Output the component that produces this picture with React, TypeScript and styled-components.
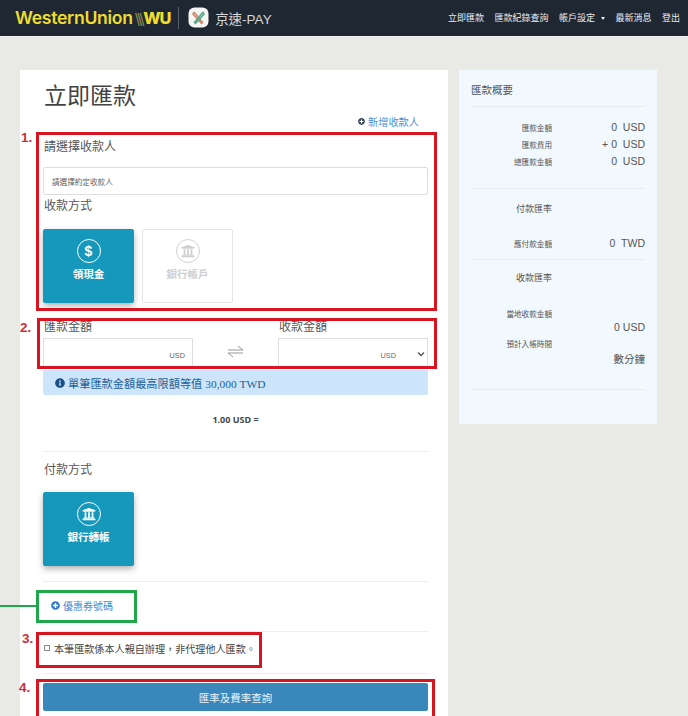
import styled, { createGlobalStyle } from "styled-components";
import { FaInfoCircle, FaPlusCircle, FaUniversity } from "react-icons/fa";

const GlobalStyle = createGlobalStyle`
  html, body {
    margin: 0;
    padding: 0;
    height: 716px;
    overflow: hidden;
    background: #e9eae6;
    font-family: "Liberation Sans", "Noto Sans CJK TC", sans-serif;
    color: #444;
  }
  * { box-sizing: border-box; }
`;

const Page = styled.div`
  position: relative;
  width: 688px;
  height: 716px;
  overflow: hidden;
`;

const Header = styled.header`
  display: flex;
  align-items: center;
  justify-content: space-between;
  height: 37px;
  padding: 0 8px 1px 15px;
  background: #1f2733;
  border-bottom: 1px solid #f4f4f2;
`;

const Brand = styled.div`
  display: flex;
  align-items: center;
`;

const WuLogo = styled.span`
  font-family: "Inter", "Liberation Sans", sans-serif;
  font-size: 17.6px;
  font-weight: 600;
  letter-spacing: -0.3px;
  color: #efdc2d;
`;

const Stripes = styled.span`
  color: #8f8a4c;
  font-size: 15px;
  letter-spacing: -2.4px;
  margin: 0 1px 0 2px;
  font-weight: 400;
`;

const WuMark = styled.span`
  font-size: 16.4px;
  font-weight: 800;
  letter-spacing: -1.2px;
`;

const BrandDivider = styled.span`
  width: 1px;
  height: 22px;
  margin: 0 9px 0 8px;
  background: #59606a;
`;

const PayName = styled.span`
  margin-left: 6px;
  font-size: 13.5px;
  color: #d4d6d8;
`;

const Nav = styled.nav`
  display: flex;
  align-items: center;
  gap: 10.5px;
  font-size: 9px;
  color: #eceef0;
`;

const Caret = styled.span`
  display: inline-block;
  margin-left: 6px;
  vertical-align: middle;
  border-top: 3px solid #eceef0;
  border-left: 2.5px solid transparent;
  border-right: 2.5px solid transparent;
`;

const Main = styled.main`
  display: flex;
  align-items: flex-start;
  gap: 11px;
  padding: 33px 0 0 20px;
`;

const Card = styled.section`
  width: 428px;
  height: 660px;
  padding: 0 20px 0 23px;
  background: #fff;
`;

const Title = styled.h1`
  margin: 12px 0 0 1px;
  font-size: 23px;
  line-height: 28px;
  font-weight: 400;
  color: #444;
`;

const AddLink = styled.div`
  display: flex;
  align-items: center;
  justify-content: flex-end;
  gap: 3px;
  height: 14px;
  margin: 4px 9px 0 0;
  font-size: 10.2px;
  color: #4a90d9;
  svg { color: #39475a; font-size: 7px; }
`;

const SectionLabel = styled.div<{ $top: number }>`
  margin-top: ${(p) => p.$top}px;
  margin-left: 1px;
  font-size: 12px;
  line-height: 16px;
  color: #555;
`;

const SelectBox = styled.div`
  display: flex;
  align-items: center;
  height: 28px;
  margin-top: 12px;
  padding-left: 8px;
  border: 1px solid #ddd;
  border-radius: 2px;
  font-size: 7.6px;
  color: #666;
`;

const Tiles = styled.div<{ $top: number }>`
  display: flex;
  gap: 8px;
  margin-top: ${(p) => p.$top}px;
`;

const Tile = styled.div<{ $active?: boolean }>`
  display: flex;
  flex-direction: column;
  align-items: center;
  width: 91px;
  height: 74px;
  padding-top: 9px;
  border-radius: 2px;
  border: 1px solid ${(p) => (p.$active ? "#1698bd" : "#e4e4e4")};
  background: ${(p) => (p.$active ? "#1698bd" : "#fff")};
  color: ${(p) => (p.$active ? "#fff" : "#d0d0d0")};
  box-shadow: ${(p) => (p.$active ? "0 3px 6px rgba(0,0,0,.3)" : "none")};
`;

const TileIcon = styled.span`
  display: flex;
  align-items: center;
  justify-content: center;
  width: 24px;
  height: 24px;
  border: 1px solid currentColor;
  border-radius: 50%;
  font-size: 14px;
  font-weight: 700;
  svg { font-size: 14px; }
`;

const TileLabel = styled.span`
  margin-top: 4px;
  font-size: 10.5px;
  line-height: 14px;
  font-weight: 700;
`;

const AmountRow = styled.div`
  display: grid;
  grid-template-columns: 150px 85px 150px;
  margin-top: 16px;
`;

const AmountColumn = styled.div`
  display: flex;
  flex-direction: column;
`;

const AmountLabel = styled.div`
  margin-left: 1px;
  font-size: 12px;
  line-height: 16px;
  color: #555;
`;

const AmountInput = styled.div`
  display: flex;
  align-items: flex-end;
  justify-content: space-between;
  height: 30px;
  margin-top: 3px;
  padding: 0 7px 8px 0;
  border: 1px solid #ddd;
  border-bottom: 0;
  font-size: 7.3px;
  color: #666;
`;

const UsdTag = styled.span<{ $select?: boolean }>`
  margin-left: auto;
  margin-right: ${(p) => (p.$select ? "24px" : "0")};
`;

const Chevron = styled.svg`
  position: absolute;
  right: 3px;
  bottom: 11px;
  width: 8px;
  height: 6px;
`;

const SelectWrap = styled.div`
  position: relative;
`;

const SwapIcon = styled.svg`
  width: 17px;
  height: 13px;
  margin: 26px 0 0 34px;
`;

const Notice = styled.div`
  display: flex;
  align-items: center;
  gap: 3px;
  height: 25px;
  margin-top: 2px;
  padding-left: 12px;
  background: #cce5fb;
  border-radius: 0 0 2px 2px;
  font-size: 11.2px;
  color: #1e5f96;
  svg { font-size: 10px; color: #1a4f84; }
`;

const Latin = styled.span`
  font-family: "Liberation Serif", serif;
  font-size: 11.4px;
`;

const Rate = styled.div`
  margin-top: 19px;
  text-align: center;
  font-family: "Open Sans", "Liberation Sans", sans-serif;
  font-size: 9px;
  line-height: 12px;
  font-weight: 700;
  color: #444;
`;

const Rule = styled.hr<{ $top: number }>`
  margin: ${(p) => p.$top}px 0 0;
  border: 0;
  border-top: 1px solid #eee;
`;

const Coupon = styled.div`
  display: flex;
  align-items: center;
  gap: 3px;
  height: 14px;
  margin: 16px 0 0 8px;
  font-size: 10px;
  color: #4a8bd0;
  svg { font-size: 9px; color: #2f79c8; }
`;

const Consent = styled.label`
  display: flex;
  align-items: center;
  gap: 4px;
  height: 14px;
  margin-top: 9px;
  font-size: 10.1px;
  color: #444;
`;

const Tick = styled.span`
  width: 6px;
  height: 6px;
  margin-left: 1px;
  border: 1px solid #888;
`;

const SubmitButton = styled.button`
  display: block;
  width: 385px;
  height: 28px;
  margin-top: 9px;
  border: 0;
  border-radius: 2px;
  background: #3a87bc;
  color: #e8f2f8;
  font: inherit;
  font-size: 10.5px;
`;

const Summary = styled.aside`
  width: 198px;
  height: 354px;
  padding: 13px 12px 0;
  background: #f2f9fe;
`;

const SummaryTitle = styled.div`
  height: 15px;
  font-size: 10.5px;
  line-height: 15px;
  color: #555;
`;

const SummaryRule = styled.hr<{ $top: number }>`
  margin: ${(p) => p.$top}px 0 0;
  border: 0;
  border-top: 1px solid #e6edf0;
`;

const SummaryRow = styled.div<{ $top: number }>`
  display: grid;
  grid-template-columns: 81px 1fr;
  align-items: center;
  height: 12px;
  margin-top: ${(p) => p.$top}px;
  font-size: 10.5px;
  color: #555;
`;

const RowLabel = styled.span<{ $large?: boolean }>`
  text-align: right;
  white-space: nowrap;
  font-size: ${(p) => (p.$large ? "9px" : "7.6px")};
`;

const RowValue = styled.span`
  text-align: right;
  white-space: pre;
`;

const Annotation = styled.div<{ $x: number; $y: number; $w: number; $h: number; $color?: string }>`
  position: absolute;
  left: ${(p) => p.$x}px;
  top: ${(p) => p.$y}px;
  width: ${(p) => p.$w}px;
  height: ${(p) => p.$h}px;
  border: 3px solid ${(p) => p.$color ?? "#d7141f"};
`;

const Step = styled.span<{ $x: number; $y: number }>`
  position: absolute;
  left: ${(p) => p.$x}px;
  top: ${(p) => p.$y}px;
  font-size: 13.5px;
  line-height: 16px;
  font-weight: 700;
  color: #c8303a;
`;

const Leader = styled.div`
  position: absolute;
  left: 0;
  top: 605px;
  width: 37px;
  height: 2px;
  background: #1fa84a;
`;

const JingsuIcon = () => (
  <svg width="21" height="21" viewBox="0 0 21 21">
    <rect x="0.5" y="0.5" width="20" height="20" rx="6" fill="#f5f5f3" />
    <path d="M6 5l9 11M6 5l-1 2 9 10" fill="none" stroke="#d98870" strokeWidth="1.6" />
    <path d="M15 5L6 16M15 5l1 2-9 10" fill="none" stroke="#58a98c" strokeWidth="1.6" />
  </svg>
);

const App = () => {
  return (
    <Page>
      <GlobalStyle />
      <Header>
        <Brand>
          <WuLogo>
            WesternUnion<Stripes>\\\</Stripes>
            <WuMark>WU</WuMark>
          </WuLogo>
          <BrandDivider />
          <JingsuIcon />
          <PayName>京速-PAY</PayName>
        </Brand>
        <Nav>
          <span>立即匯款</span>
          <span>匯款紀錄查詢</span>
          <span>
            帳戶設定
            <Caret />
          </span>
          <span>最新消息</span>
          <span>登出</span>
        </Nav>
      </Header>

      <Main>
        <Card>
          <Title>立即匯款</Title>
          <AddLink>
            <FaPlusCircle />
            新增收款人
          </AddLink>

          <SectionLabel $top={11}>請選擇收款人</SectionLabel>
          <SelectBox>請選擇約定收款人</SelectBox>
          <SectionLabel $top={3}>收款方式</SectionLabel>
          <Tiles $top={15}>
            <Tile $active>
              <TileIcon>$</TileIcon>
              <TileLabel>領現金</TileLabel>
            </Tile>
            <Tile>
              <TileIcon>
                <FaUniversity />
              </TileIcon>
              <TileLabel>銀行帳戶</TileLabel>
            </Tile>
          </Tiles>

          <AmountRow>
            <AmountColumn>
              <AmountLabel>匯款金額</AmountLabel>
              <AmountInput>
                <UsdTag>USD</UsdTag>
              </AmountInput>
            </AmountColumn>
            <SwapIcon viewBox="0 0 17 13">
              <path d="M1 5h15L11 1M16 8H1l5 4" fill="none" stroke="#999" strokeWidth="1" />
            </SwapIcon>
            <AmountColumn>
              <AmountLabel>收款金額</AmountLabel>
              <SelectWrap>
                <AmountInput>
                  <UsdTag $select>USD</UsdTag>
                </AmountInput>
                <Chevron viewBox="0 0 8 6">
                  <path d="M1 1.5l3 3 3-3" fill="none" stroke="#555" strokeWidth="1.4" />
                </Chevron>
              </SelectWrap>
            </AmountColumn>
          </AmountRow>

          <Notice>
            <FaInfoCircle />
            <span>
              單筆匯款金額最高限額等值 <Latin>30,000 TWD</Latin>
            </span>
          </Notice>

          <Rate>1.00 USD =</Rate>
          <Rule $top={25} />
          <SectionLabel $top={10}>付款方式</SectionLabel>
          <Tiles $top={14}>
            <Tile $active>
              <TileIcon>
                <FaUniversity />
              </TileIcon>
              <TileLabel>銀行轉帳</TileLabel>
            </Tile>
          </Tiles>
          <Rule $top={15} />
          <Coupon>
            <FaPlusCircle />
            優惠券號碼
          </Coupon>
          <Rule $top={19} />
          <Consent>
            <Tick />
            本筆匯款係本人親自辦理{"\uFF0C"}非代理他人匯款。
          </Consent>
          <Rule $top={18} />
          <SubmitButton>匯率及費率查詢</SubmitButton>
        </Card>

        <Summary>
          <SummaryTitle>匯款概要</SummaryTitle>
          <SummaryRule $top={8} />
          <SummaryRow $top={14}>
            <RowLabel>匯款金額</RowLabel>
            <RowValue>0  USD</RowValue>
          </SummaryRow>
          <SummaryRow $top={5}>
            <RowLabel>匯款費用</RowLabel>
            <RowValue>+ 0  USD</RowValue>
          </SummaryRow>
          <SummaryRow $top={5}>
            <RowLabel>總匯款金額</RowLabel>
            <RowValue>0  USD</RowValue>
          </SummaryRow>
          <SummaryRule $top={21} />
          <SummaryRow $top={13}>
            <RowLabel $large>付款匯率</RowLabel>
          </SummaryRow>
          <SummaryRow $top={23}>
            <RowLabel>應付款金額</RowLabel>
            <RowValue>0  TWD</RowValue>
          </SummaryRow>
          <SummaryRule $top={10} />
          <SummaryRow $top={11}>
            <RowLabel $large>收款匯率</RowLabel>
          </SummaryRow>
          <SummaryRow $top={24}>
            <RowLabel>當地收款金額</RowLabel>
          </SummaryRow>
          <SummaryRow $top={2}>
            <span />
            <RowValue>0 USD</RowValue>
          </SummaryRow>
          <SummaryRow $top={4}>
            <RowLabel>預計入帳時間</RowLabel>
          </SummaryRow>
          <SummaryRow $top={2}>
            <span />
            <RowValue>數分鐘</RowValue>
          </SummaryRow>
          <SummaryRule $top={26} />
        </Summary>
      </Main>

      <Annotation $x={36} $y={132} $w={401} $h={179} />
      <Annotation $x={37} $y={318} $w={400} $h={51} />
      <Annotation $x={36} $y={590} $w={101} $h={33} $color="#1fa84a" />
      <Annotation $x={36} $y={632} $w={226} $h={36} />
      <Annotation $x={36} $y={679} $w={399} $h={40} />
      <Leader />
      <Step $x={21} $y={130}>1.</Step>
      <Step $x={20} $y={320}>2.</Step>
      <Step $x={22} $y={631}>3.</Step>
      <Step $x={19} $y={680}>4.</Step>
    </Page>
  );
};

export default App;
